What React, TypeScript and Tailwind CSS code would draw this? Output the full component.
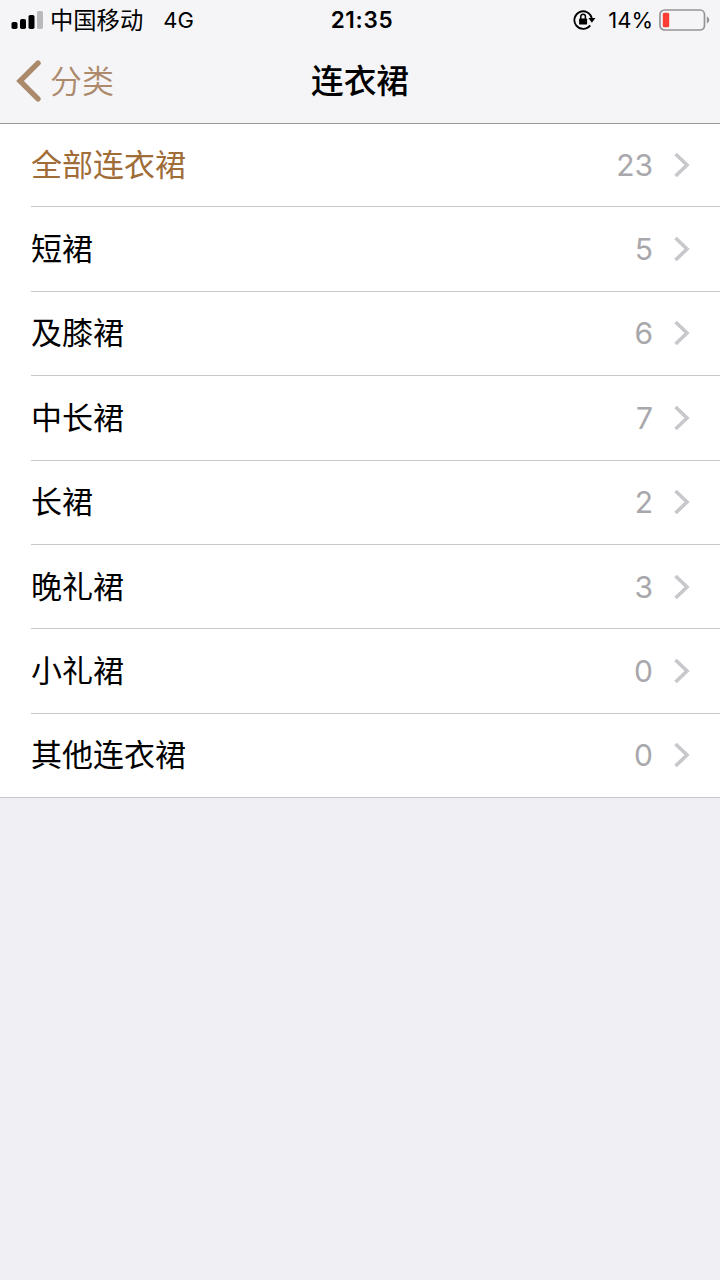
interface Category {
  name: string;
  count: number;
  active?: boolean;
}

const categories: Category[] = [
  { name: '全部连衣裙', count: 23, active: true },
  { name: '短裙', count: 5 },
  { name: '及膝裙', count: 6 },
  { name: '中长裙', count: 7 },
  { name: '长裙', count: 2 },
  { name: '晚礼裙', count: 3 },
  { name: '小礼裙', count: 0 },
  { name: '其他连衣裙', count: 0 },
];

function StatusBar() {
  return (
    <div className="grid h-10 grid-cols-3 items-center text-[22px] leading-10 text-black">
      <div className="flex h-10 items-center pl-[11px]">
        <svg width="33" height="20" viewBox="0 0 33 20" className="shrink-0">
          <rect x="0.5" y="12" width="6" height="7" rx="1.8" />
          <rect x="9" y="9" width="6" height="10" rx="1.8" />
          <rect x="17.5" y="5" width="6" height="14" rx="1.8" />
          <rect x="26" y="1" width="6" height="18" rx="1.8" fill="#b9b9bc" />
        </svg>
        <span className="ml-1.5 whitespace-nowrap pt-0.5 text-[23.3px]">中国移动</span>
        <span className="ml-5">4G</span>
      </div>
      <div className="h-10 pl-1 text-center text-[22.5px] font-semibold tracking-[0.7px]">21:35</div>
      <div className="flex h-10 items-center justify-end pr-2.5">
        <svg width="23" height="22" viewBox="0 0 23 22" fill="none" className="shrink-0">
          <path d="M17.2 16.4A8.8 8.8 0 1 1 18.8 9.4" stroke="#000" strokeWidth="1.8" />
          <path d="M15.4 9h7l-3.5 4.8z" fill="#000" />
          <rect x="6.1" y="9.4" width="8" height="6.2" rx="0.9" fill="#000" />
          <path d="M7.8 10V7.5a2.3 2.3 0 0 1 4.6 0V10" stroke="#000" strokeWidth="1.5" />
        </svg>
        <span className="ml-3 text-[22px]">14%</span>
        <svg width="51" height="22" viewBox="0 0 51 22" fill="none" className="ml-1.5 shrink-0">
          <rect x="1" y="1" width="44.5" height="20" rx="4.5" stroke="#949497" strokeWidth="1.7" />
          <rect x="3.8" y="3.8" width="6.4" height="14.4" rx="1.5" fill="#fc3d35" />
          <path d="M47.8 7.6c1.6.7 2.4 1.9 2.4 3.4s-.8 2.7-2.4 3.4z" fill="#949497" />
        </svg>
      </div>
    </div>
  );
}

function NavBar() {
  return (
    <div className="grid h-[83px] grid-cols-3 items-center pb-0.5">
      <button className="flex items-center pl-4 text-[32px] font-[350] text-[#ad8a6c]">
        <svg width="26" height="42" viewBox="0 0 26 42" fill="none" className="shrink-0">
          <path d="M22 3.2L4 21l18 17.8" stroke="#ab896b" strokeWidth="5.4" strokeLinecap="round" />
        </svg>
        <span className="ml-2 whitespace-nowrap pt-0.5">分类</span>
      </button>
      <h1 className="pt-[3px] text-center text-[32.7px] font-medium text-black">连衣裙</h1>
    </div>
  );
}

function CategoryRow({ category, last }: { category: Category; last: boolean }) {
  return (
    <li
      className={`flex flex-1 items-center pr-[30px] ${last ? '' : 'border-b border-[#c8c7cc]'}`}
    >
      <span
        className={`flex-1 text-[31px] leading-10 ${category.active ? 'text-[#a06c37]' : 'text-black'}`}
      >
        {category.name}
      </span>
      <span className="text-[30px] leading-10 text-[#a8a8ac]">{category.count}</span>
      <svg width="16" height="26" viewBox="0 0 16 26" fill="none" className="ml-[21px]">
        <path d="M1.5 2L13 13L1.5 24" stroke="#c7c7cc" strokeWidth="3.6" />
      </svg>
    </li>
  );
}

export default function App() {
  return (
    <div className="flex h-[1280px] w-[720px] flex-col overflow-hidden bg-[#efeff4] font-[Inter,'Noto_Sans_CJK_SC',sans-serif]">
      <header className="relative z-10 h-[124px] shrink-0 border-b border-[#98989b] bg-[#f5f5f7]">
        <StatusBar />
        <NavBar />
      </header>
      <ul className="-mt-px flex h-[675px] shrink-0 flex-col border-b border-[#c8c7cc] bg-white pl-[31px]">
        {categories.map((category, index) => (
          <CategoryRow
            key={category.name}
            category={category}
            last={index === categories.length - 1}
          />
        ))}
      </ul>
    </div>
  );
}
